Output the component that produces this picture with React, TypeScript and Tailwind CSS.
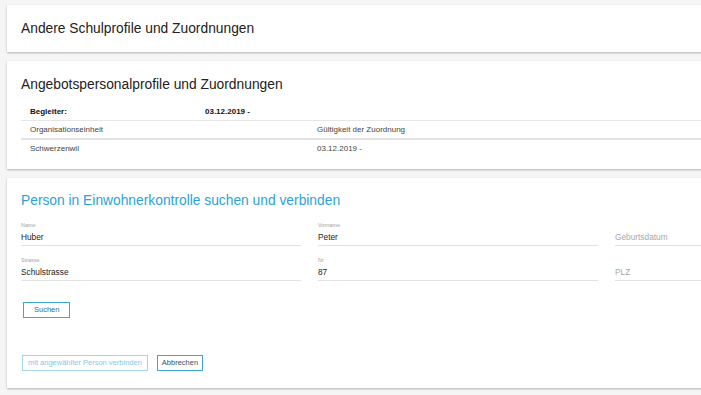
import React from "react";

const font = { fontFamily: '"Liberation Sans", Arial, sans-serif' };

function Field({ label, value, placeholder }: { label?: string; value?: string; placeholder?: string }) {
  return (
    <div className="w-[280px] flex flex-col">
      <div className="h-[8px] leading-[8px] text-[5.5px] text-[#a4a4a4]">{label ?? ""}</div>
      <div className="h-[17px] flex items-center text-[8.3px] border-b border-[#e2e2e2]">
        {value ? (
          <span className="text-[#222]">{value}</span>
        ) : (
          <span className="text-[#a8a8a8]">{placeholder}</span>
        )}
      </div>
    </div>
  );
}

export default function App() {
  return (
    <div className="w-full h-[395px] overflow-hidden bg-[#f5f5f5] flex flex-col gap-[9px] pt-[5px]" style={font}>
      {/* Card 1 */}
      <div className="ml-[7px] w-[930px] shrink-0 h-[47px] bg-white shadow-[0_1px_2px_rgba(0,0,0,0.28)] flex items-center pl-[14px]">
        <h2 className="text-[13.8px] leading-[16px] text-[#222]">Andere Schulprofile und Zuordnungen</h2>
      </div>

      {/* Card 2 */}
      <div className="ml-[7px] w-[930px] shrink-0 bg-white shadow-[0_1px_2px_rgba(0,0,0,0.28)] pt-[16px] pb-[12px] pl-[14px]">
        <h2 className="text-[13.8px] leading-[16px] text-[#222]">Angebotspersonalprofile und Zuordnungen</h2>
        <div className="mt-[10px] text-[8px]">
          <div className="h-[18px] flex items-center border-b border-[#e6e6e6] font-bold text-[#111]">
            <div className="w-[184px] pl-[9px]">Begleiter:</div>
            <div>03.12.2019 -</div>
          </div>
          <div className="h-[19px] flex items-center border-b-2 border-[#e2e2e2] text-[#444]">
            <div className="w-[296px] pl-[9px]">Organisationseinheit</div>
            <div>Gültigkeit der Zuordnung</div>
          </div>
          <div className="h-[17px] flex items-center text-[#444]">
            <div className="w-[296px] pl-[9px]">Schwerzenwil</div>
            <div>03.12.2019 -</div>
          </div>
        </div>
      </div>

      {/* Card 3 */}
      <div className="ml-[7px] w-[930px] shrink-0 bg-white shadow-[0_1px_2px_rgba(0,0,0,0.28)] pt-[15px] pb-[17px] pl-[14px]">
        <h2 className="text-[13.8px] leading-[16px] text-[#2aa3dc]">Person in Einwohnerkontrolle suchen und verbinden</h2>
        <div className="mt-[12px] flex gap-[17px]">
          <Field label="Name" value="Huber" />
          <Field label="Vorname" value="Peter" />
          <Field placeholder="Geburtsdatum" />
        </div>
        <div className="mt-[10px] flex gap-[17px]">
          <Field label="Strasse" value="Schulstrasse" />
          <Field label="Nr" value="87" />
          <Field placeholder="PLZ" />
        </div>
        <div className="mt-[21px] pl-[2px] flex">
          <button className="h-[16px] leading-[14px] px-[10px] border border-[#3ba5d6] text-[7.5px] text-[#2f6f95] bg-white">Suchen</button>
        </div>
        <div className="mt-[37px] pl-[1px] flex gap-[9px]">
          <button className="h-[16px] leading-[14px] px-[5px] border border-[#a3d6ee] text-[7.5px] text-[#86c7e6] bg-white">mit angewählter Person verbinden</button>
          <button className="h-[16px] leading-[14px] px-[4px] border border-[#3ba5d6] text-[7.5px] text-[#33536b] bg-white">Abbrechen</button>
        </div>
      </div>
    </div>
  );
}
